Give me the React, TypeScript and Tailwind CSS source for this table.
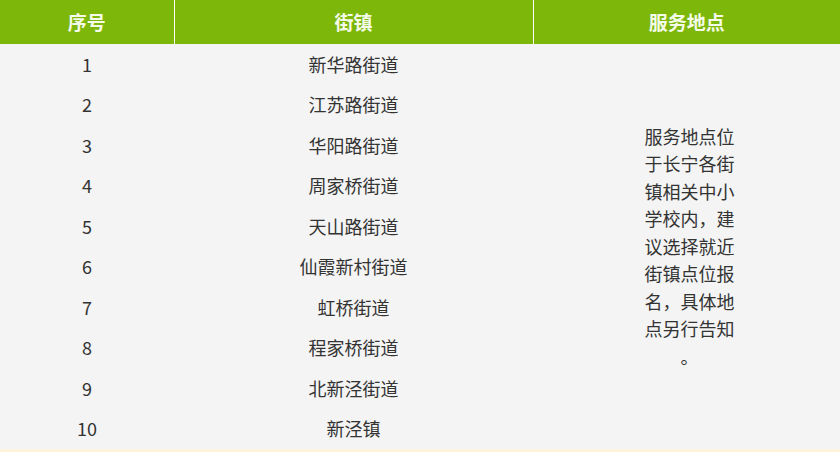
import React from 'react';

const streets = [
  '新华路街道',
  '江苏路街道',
  '华阳路街道',
  '周家桥街道',
  '天山路街道',
  '仙霞新村街道',
  '虹桥街道',
  '程家桥街道',
  '北新泾街道',
  '新泾镇',
];

// the note wraps at five characters in the original, with the full stop left alone on the last line
const noteLines = [
  '服务地点位',
  '于长宁各街',
  '镇相关中小',
  '学校内，建',
  '议选择就近',
  '街镇点位报',
  '名，具体地',
  '点另行告知',
  '。',
];

export default function App() {
  return (
    <div
      className="w-[840px] h-[452px] bg-[#fdf3dc] overflow-hidden"
      style={{ fontFamily: '"Microsoft YaHei", "Noto Sans CJK SC", sans-serif' }}
    >
      <table className="w-full border-collapse bg-[#f4f4f4] text-[#333] text-[18px]">
        <thead>
          <tr className="h-[44px] bg-[#7db709] text-[#f4fbe8] text-[19px] font-bold">
            <th className="w-[174px] border-r border-white">序号</th>
            <th className="w-[359px] border-r border-white">街镇</th>
            <th>服务地点</th>
          </tr>
        </thead>
        <tbody>
          {streets.map((name, i) => (
            <tr key={name} className="h-[40.5px]">
              <td className="text-center">{i + 1}</td>
              <td className="text-center">{name}</td>
              {i === 0 && (
                <td rowSpan={10} className="align-middle">
                  <div className="w-[92px] mx-auto pl-[6px] box-content text-center leading-[27.5px] whitespace-nowrap">
                    {noteLines.map((line) => (
                      <div key={line}>{line}</div>
                    ))}
                  </div>
                </td>
              )}
            </tr>
          ))}
        </tbody>
      </table>
    </div>
  );
}
